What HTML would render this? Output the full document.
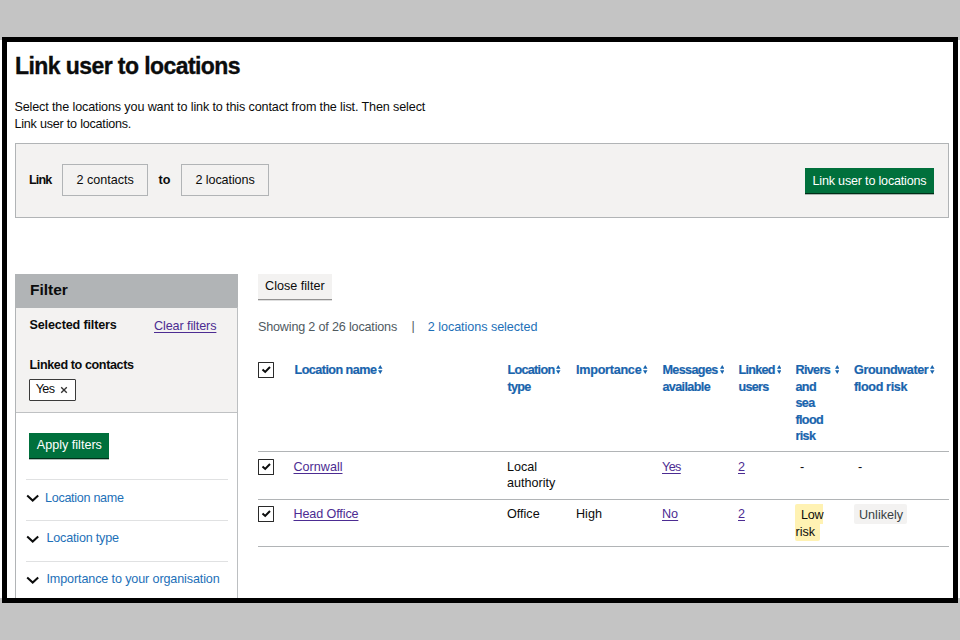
<!DOCTYPE html>
<html><head><meta charset="utf-8">
<style>
html,body{margin:0;padding:0;}
body{width:960px;height:640px;background:#c4c4c4;position:relative;overflow:hidden;font-family:"Liberation Sans",sans-serif;color:#0b0c0c;}
.band{position:absolute;left:0;top:40px;width:960px;height:558px;background:#fff;}
.frame{position:absolute;left:2px;top:37px;width:946px;height:556px;border:5px solid #000;background:#fff;}
.t{position:absolute;white-space:nowrap;line-height:1;font-size:12.6px;}
.b{font-weight:700;}
.blue{color:#1d70b8;}
.grey{color:#505a5f;}
.vis{color:#4c2c92;text-decoration:underline;text-decoration-thickness:1px;text-underline-offset:2px;}
.box{position:absolute;box-sizing:border-box;}
.hline{position:absolute;height:1px;background:#b1b4b6;}
.cb{position:absolute;box-sizing:border-box;width:16px;height:16px;border:1.6px solid #2a2a2a;border-radius:0.6px;background:#fff;}
.cb svg{position:absolute;left:2px;top:2px;}
.sort{display:inline-block;width:4.5px;height:9px;margin-left:2px;vertical-align:0px;letter-spacing:0;}
.th{position:absolute;font-weight:700;color:#1964ad;-webkit-text-stroke:0.2px #1964ad;font-size:12.6px;line-height:16.5px;letter-spacing:-0.45px;white-space:nowrap;}
.td{position:absolute;font-size:12.6px;line-height:16.5px;}
.chev{position:absolute;}
</style></head>
<body>
<div class="band"></div>
<div class="frame"></div>

<!-- heading -->
<div class="t b" style="left:15px;top:54.6px;font-size:23px;letter-spacing:-0.58px;-webkit-text-stroke:0.35px #0b0c0c;">Link user to locations</div>
<div class="t" style="left:14.4px;top:101px;letter-spacing:-0.13px;">Select the locations you want to link to this contact from the list. Then select</div>
<div class="t" style="left:14.4px;top:118px;letter-spacing:-0.22px;">Link user to locations.</div>

<!-- link panel -->
<div class="box" style="left:15px;top:143px;width:934px;height:75px;background:#f3f2f1;border:1px solid #b1b4b6;"></div>
<div class="t b" style="left:29px;top:173.5px;letter-spacing:-0.9px;">Link</div>
<div class="box" style="left:62px;top:164.1px;width:86px;height:32.4px;border:1px solid #b1b4b6;"></div>
<div class="t" style="left:76.5px;top:174px;">2 contacts</div>
<div class="t b" style="left:158.5px;top:174px;">to</div>
<div class="box" style="left:181px;top:164.1px;width:88px;height:32.4px;border:1px solid #b1b4b6;"></div>
<div class="t" style="left:195.5px;top:174px;letter-spacing:-0.1px;">2 locations</div>
<div class="box" style="left:805px;top:167.7px;width:129px;height:25px;background:#00703c;box-shadow:0 1.3px 0 #002d18;"></div>
<div class="t" style="left:812.5px;top:174.5px;color:#fff;letter-spacing:-0.2px;">Link user to locations</div>

<!-- filter panel -->
<div class="box" style="left:15px;top:274.2px;width:223.4px;height:33.4px;background:#b1b4b6;"></div>
<div class="t b" style="left:30px;top:281.6px;font-size:15.5px;">Filter</div>
<div class="box" style="left:15px;top:307.6px;width:223.4px;height:105.9px;background:#f3f2f1;border-bottom:1.5px solid #bfc1c3;"></div>
<div class="box" style="left:15px;top:307px;width:1px;height:291px;background:#b1b4b6;"></div>
<div class="box" style="left:237px;top:307px;width:1.4px;height:291px;background:#bcbfc1;"></div>
<div class="t b" style="left:29.5px;top:319px;letter-spacing:-0.15px;">Selected filters</div>
<div class="t vis" style="left:154px;top:320px;letter-spacing:-0.1px;">Clear filters</div>
<div class="t b" style="left:29.5px;top:359px;letter-spacing:-0.4px;">Linked to contacts</div>
<div class="box" style="left:29px;top:379.4px;width:46.8px;height:21.2px;border:1.35px solid #3a3a3a;border-radius:1px;background:#fff;"></div>
<div class="t" style="left:35.8px;top:382.7px;letter-spacing:-0.7px;">Yes</div>
<svg style="position:absolute;left:60.2px;top:386px" width="8" height="8" viewBox="0 0 8 8"><path d="M1.2 1.2L6.8 6.8M6.8 1.2L1.2 6.8" stroke="#333" stroke-width="1.35"/></svg>

<div class="box" style="left:28.8px;top:433.2px;width:80.2px;height:24.8px;background:#00703c;box-shadow:0 1.3px 0 #002d18;"></div>
<div class="t" style="left:36.8px;top:438.7px;color:#fff;">Apply filters</div>

<div class="hline" style="left:26px;top:479px;width:202px;background:#e0e1e2;"></div>
<div class="hline" style="left:26px;top:520px;width:202px;background:#e0e1e2;"></div>
<div class="hline" style="left:26px;top:561px;width:202px;background:#e0e1e2;"></div>
<svg class="chev" style="left:26px;top:493.2px" width="14" height="10" viewBox="0 0 14 10"><path d="M1.2 2.5L6.7 7.6L12.2 2.5" fill="none" stroke="#0b0c0c" stroke-width="2"/></svg>
<svg class="chev" style="left:26px;top:534.2px" width="14" height="10" viewBox="0 0 14 10"><path d="M1.2 2.5L6.7 7.6L12.2 2.5" fill="none" stroke="#0b0c0c" stroke-width="2"/></svg>
<svg class="chev" style="left:26px;top:575.2px" width="14" height="10" viewBox="0 0 14 10"><path d="M1.2 2.5L6.7 7.6L12.2 2.5" fill="none" stroke="#0b0c0c" stroke-width="2"/></svg>
<div class="t blue" style="left:45px;top:491.5px;letter-spacing:-0.3px;">Location name</div>
<div class="t blue" style="left:46.5px;top:532px;letter-spacing:-0.2px;">Location type</div>
<div class="t blue" style="left:46.5px;top:573px;letter-spacing:-0.13px;">Importance to your organisation</div>

<!-- results -->
<div class="box" style="left:258.3px;top:274.2px;width:73.6px;height:24.8px;background:#f3f2f1;box-shadow:0 1.3px 0 #929191;"></div>
<div class="t" style="left:265.1px;top:280px;">Close filter</div>
<div class="t grey" style="left:258px;top:321px;letter-spacing:-0.18px;">Showing 2 of 26 locations</div>
<div class="t grey" style="left:411.5px;top:319.5px;">|</div>
<div class="t blue" style="left:427.8px;top:321px;letter-spacing:-0.05px;">2 locations selected</div>

<!-- table -->
<div class="cb" style="left:258px;top:362px;"><svg width="10" height="10" viewBox="0 0 10 10"><path d="M1.5 4.4L4.2 6.9L9 2" fill="none" stroke="#0b0c0c" stroke-width="2"/></svg></div>
<div class="th" style="left:294.5px;top:362px;letter-spacing:-0.54px;">Location name<svg class="sort" viewBox="0 0 9 18"><path d="M4.5 0L9 7.5H0Z M4.5 18L9 10.5H0Z" fill="#1964ad"/></svg></div>
<div class="th" style="left:507.5px;top:362px;letter-spacing:-0.7px;">Location<svg class="sort" viewBox="0 0 9 18"><path d="M4.5 0L9 7.5H0Z M4.5 18L9 10.5H0Z" fill="#1964ad"/></svg><br>type</div>
<div class="th" style="left:576px;top:362px;letter-spacing:-0.25px;">Importance<svg class="sort" viewBox="0 0 9 18"><path d="M4.5 0L9 7.5H0Z M4.5 18L9 10.5H0Z" fill="#1964ad"/></svg></div>
<div class="th" style="left:662.5px;top:362px;letter-spacing:-0.63px;">Messages<svg class="sort" viewBox="0 0 9 18"><path d="M4.5 0L9 7.5H0Z M4.5 18L9 10.5H0Z" fill="#1964ad"/></svg><br>available</div>
<div class="th" style="left:738.5px;top:362px;letter-spacing:-0.74px;">Linked<svg class="sort" viewBox="0 0 9 18"><path d="M4.5 0L9 7.5H0Z M4.5 18L9 10.5H0Z" fill="#1964ad"/></svg><br>users</div>
<div class="th" style="left:795.5px;top:362px;letter-spacing:-0.66px;">Rivers <svg class="sort" viewBox="0 0 9 18"><path d="M4.5 0L9 7.5H0Z M4.5 18L9 10.5H0Z" fill="#1964ad"/></svg><br>and<br>sea<br>flood<br>risk</div>
<div class="th" style="left:854px;top:362px;letter-spacing:-0.36px;">Groundwater<svg class="sort" viewBox="0 0 9 18"><path d="M4.5 0L9 7.5H0Z M4.5 18L9 10.5H0Z" fill="#1964ad"/></svg><br>flood risk</div>
<div class="hline" style="left:258px;top:450.5px;width:691px;"></div>

<div class="cb" style="left:258px;top:458.7px;"><svg width="10" height="10" viewBox="0 0 10 10"><path d="M1.5 4.4L4.2 6.9L9 2" fill="none" stroke="#0b0c0c" stroke-width="2"/></svg></div>
<div class="td vis" style="left:293.5px;top:458.5px;">Cornwall</div>
<div class="td" style="left:507px;top:458.5px;">Local<br>authority</div>
<div class="td vis" style="left:662px;top:458.5px;letter-spacing:-0.6px;">Yes</div>
<div class="td vis" style="left:738px;top:458.5px;">2</div>
<div class="td" style="left:800px;top:458.5px;">-</div>
<div class="td" style="left:858px;top:458.5px;">-</div>
<div class="hline" style="left:258px;top:498.5px;width:691px;"></div>

<div class="cb" style="left:258px;top:506px;"><svg width="10" height="10" viewBox="0 0 10 10"><path d="M1.5 4.4L4.2 6.9L9 2" fill="none" stroke="#0b0c0c" stroke-width="2"/></svg></div>
<div class="td vis" style="left:293.5px;top:506px;letter-spacing:-0.12px;">Head Office</div>
<div class="td" style="left:507px;top:506px;">Office</div>
<div class="td" style="left:576px;top:506px;">High</div>
<div class="td vis" style="left:662px;top:506px;">No</div>
<div class="td vis" style="left:738px;top:506px;">2</div>
<div class="box" style="left:795px;top:504px;width:28px;height:19.5px;background:#fff2b3;border-radius:2px 0 0 0;"></div>
<div class="box" style="left:795px;top:523px;width:25.2px;height:17.8px;background:#fff2b3;border-radius:0 0 2px 2px;"></div>
<div class="td" style="left:801px;top:507px;color:#0b0c0c;letter-spacing:-0.3px;">Low</div>
<div class="td" style="left:795.5px;top:524px;color:#0b0c0c;">risk</div>
<div class="box" style="left:854px;top:504px;width:53px;height:19.5px;background:#f3f2f1;border-radius:2px;"></div>
<div class="td" style="left:859px;top:506.5px;color:#383f43;">Unlikely</div>
<div class="hline" style="left:258px;top:545.5px;width:691px;"></div>

</body></html>
